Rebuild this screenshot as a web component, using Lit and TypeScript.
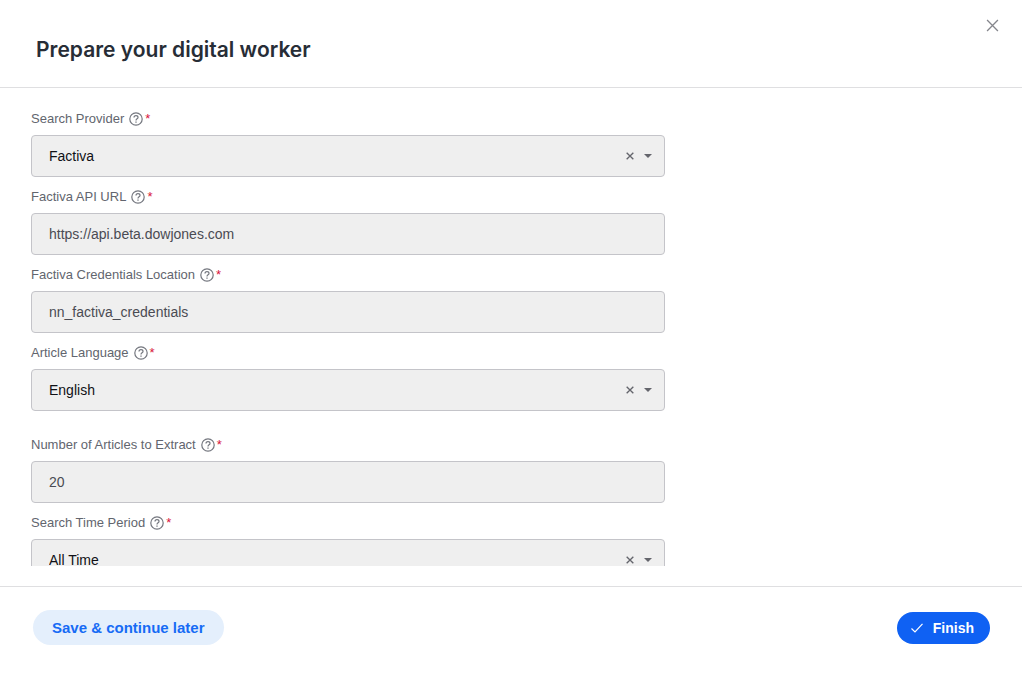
import { LitElement, html, css, svg, nothing } from "lit";
import { customElement, property, state } from "lit/decorators.js";

interface Field {
  id: string;
  label: string;
  kind: "select" | "text";
  value: string;
  options?: string[];
}

const GROUPS: Field[][] = [
  [
    { id: "provider", label: "Search Provider", kind: "select", value: "Factiva", options: ["Factiva"] },
    { id: "api-url", label: "Factiva API URL", kind: "text", value: "https://api.beta.dowjones.com" },
    { id: "credentials", label: "Factiva Credentials Location", kind: "text", value: "nn_factiva_credentials" },
    { id: "language", label: "Article Language", kind: "select", value: "English", options: ["English"] },
  ],
  [
    { id: "count", label: "Number of Articles to Extract", kind: "text", value: "20" },
    { id: "period", label: "Search Time Period", kind: "select", value: "All Time", options: ["All Time"] },
  ],
];

const cross = (size: number, width: number) => html`<svg
  width=${size} height=${size} viewBox="0 0 12 12" fill="none"
  stroke="currentColor" stroke-width=${width} aria-hidden="true"
>${svg`<path d="M1 1L11 11M11 1L1 11"/>`}</svg>`;

@customElement("worker-field")
export class WorkerField extends LitElement {
  @property({ attribute: false }) field!: Field;
  @state() private cleared = false;

  static styles = css`
    :host { display: block; }
    .caption { display: flex; align-items: center; height: 16px; margin-bottom: 8px; color: #62656e; }
    .label { font-size: 13px; line-height: 16px; }
    .help {
      display: flex; margin: 0 0 0 5px; padding: 0; border: 0;
      background: none; color: #74777f; cursor: pointer;
    }
    .required { margin-left: 2px; font-size: 13px; line-height: 16px; color: #d8143a; }
    .box { display: grid; grid-template-columns: 1fr auto; align-items: center; }
    .control {
      grid-area: 1 / 1 / 2 / 3;
      box-sizing: border-box; width: 100%; height: 42px; margin: 0; padding: 0 17px;
      border: 1px solid #c4c4c9; border-radius: 4px; background: #efefef;
      font-family: "Liberation Sans", Arial, sans-serif; font-size: 14px; color: #4a4b53;
      appearance: none; outline-color: #0f62f2;
    }
    .choice { color: #101116; }
    .tools {
      grid-area: 1 / 2 / 2 / 3; z-index: 1;
      display: flex; align-items: center; gap: 9px; margin-right: 13px; color: #64656c;
    }
    .clear { display: flex; padding: 1px; border: 0; background: none; color: inherit; cursor: pointer; }
    .arrow { display: block; pointer-events: none; }
  `;

  private renderControl() {
    const f = this.field;
    if (f.kind === "text") {
      return html`<input class="control" id=${f.id} type="text" required .value=${f.value} />`;
    }
    return html`
      <select class="control choice" id=${f.id} required @change=${() => (this.cleared = false)}>
        ${this.cleared ? html`<option value="" selected></option>` : nothing}
        ${f.options!.map((o) => html`<option ?selected=${!this.cleared && o === f.value}>${o}</option>`)}
      </select>
      <div class="tools">
        <button class="clear" type="button" aria-label="Clear" @click=${() => (this.cleared = true)}>
          ${cross(8, 2)}
        </button>
        <svg class="arrow" width="8" height="4" viewBox="0 0 8 4" aria-hidden="true">
          <path d="M0 0H8L4 4Z" fill="currentColor" />
        </svg>
      </div>`;
  }

  render() {
    return html`
      <div class="caption">
        <label class="label" for=${this.field.id}>${this.field.label}</label>
        <button class="help" type="button" aria-label="Help">
          <svg width="14" height="14" viewBox="0 0 14 14" fill="none" stroke="currentColor" aria-hidden="true">
            <circle cx="7" cy="7" r="6.2" stroke-width="1.2" />
            <path d="M5 5.6C5 4.4 5.8 3.7 7 3.7S9 4.4 9 5.5C9 6.8 7 6.9 7 8.4" stroke-width="1.2" />
            <path d="M7 9.4V10.7" stroke-width="1.3" />
          </svg>
        </button>
        <span class="required" aria-hidden="true">*</span>
      </div>
      <div class="box">${this.renderControl()}</div>`;
  }
}

@customElement("app-root")
export class AppRoot extends LitElement {
  static styles = css`
    :host {
      display: flex; flex-direction: column; height: 100vh;
      background: #fff; font-family: "Liberation Sans", Arial, sans-serif;
    }
    .header {
      display: flex; justify-content: space-between; align-items: flex-start;
      padding: 18px 22px 22px 36px; border-bottom: 1px solid #dfdfe1;
    }
    .title {
      margin: 16px 0 0; font-family: Inter, sans-serif;
      font-size: 21px; line-height: 31px; font-weight: 600; color: #272d36;
    }
    .close { display: flex; padding: 1px; border: 0; background: none; color: #85868c; cursor: pointer; }
    .content {
      flex: 1; min-height: 0; overflow-y: auto; scrollbar-width: none;
      margin-bottom: 20px; padding: 23px 31px 0;
    }
    .form { display: grid; gap: 26px; width: 66%; }
    .group { display: grid; gap: 12px; }
    .footer {
      display: flex; justify-content: space-between; align-items: center;
      padding: 23px 32px 52px 33px; border-top: 1px solid #dfdfe1;
    }
    .save, .finish {
      display: flex; align-items: center; border: 0; cursor: pointer;
      font-family: inherit; font-weight: 700;
    }
    .save {
      height: 35px; padding: 0 19px; border-radius: 18px;
      background: #e4effc; color: #166bf5; font-size: 15px;
    }
    .finish {
      gap: 10px; height: 32px; padding: 0 16px 0 14px; border-radius: 16px;
      background: #0f61f3; color: #fff; font-size: 14px;
    }
  `;

  render() {
    return html`
      <header class="header">
        <h1 class="title">Prepare your digital worker</h1>
        <button class="close" type="button" aria-label="Close">${cross(13, 1.2)}</button>
      </header>
      <main class="content">
        <form class="form">
          ${GROUPS.map(
            (group) => html`<div class="group">
              ${group.map((field) => html`<worker-field .field=${field}></worker-field>`)}
            </div>`
          )}
        </form>
      </main>
      <footer class="footer">
        <button class="save" type="button">Save &amp; continue later</button>
        <button class="finish" type="button">
          <svg width="12" height="10" viewBox="0 0 12 10" fill="none" stroke="currentColor" stroke-width="1.2" aria-hidden="true">
            <path d="M0.5 5.5L4 9L11.5 0.8" />
          </svg>
          Finish
        </button>
      </footer>`;
  }
}
